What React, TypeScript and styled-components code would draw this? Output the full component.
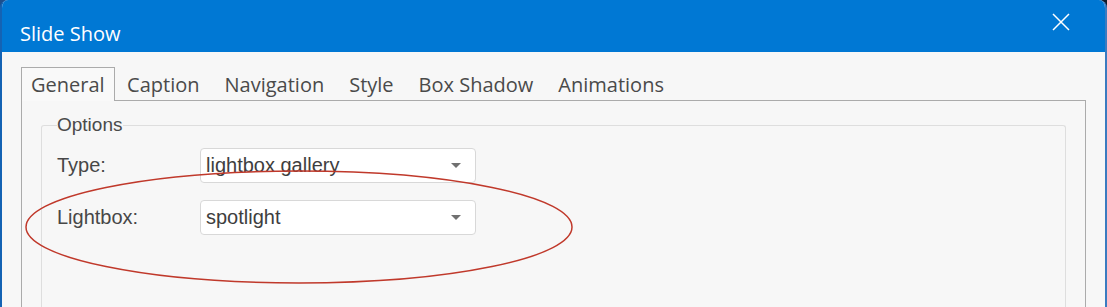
import React from 'react';
import styled, { createGlobalStyle } from 'styled-components';

const GlobalStyle = createGlobalStyle`
  html, body {
    margin: 0;
    padding: 0;
    background: linear-gradient(90deg, #1d4f8c 0%, #0e1a2a 100%);
  }
  #root {
    width: 1107px;
    height: 307px;
  }
`;

const Window = styled.div`
  position: relative;
  display: flex;
  flex-direction: column;
  width: 1107px;
  height: 307px;
  box-sizing: border-box;
  border-left: 2px solid #1463b4;
  border-right: 2px solid #3a7bc0;
  border-radius: 8px 8px 0 0;
  overflow: hidden;
  background-color: #f7f7f7;
`;

const TitleBar = styled.div`
  display: flex;
  align-items: flex-start;
  justify-content: space-between;
  flex: 0 0 52px;
  box-sizing: border-box;
  padding: 0 35px 0 18px;
  background-color: #0078d4;
  color: #ffffff;
  font-family: 'Open Sans', 'Noto Sans', sans-serif;
  font-size: 20px;
`;

const Title = styled.span`
  margin-top: 20px;
  line-height: 27px;
`;

const CloseButton = styled.div`
  display: flex;
  width: 18px;
  height: 18px;
  margin-top: 13px;
  cursor: pointer;
`;

const Body = styled.div`
  display: flex;
  flex-direction: column;
  flex: 1;
  padding: 15px 19px 0 19px;
`;

const TabStrip = styled.div`
  display: flex;
  align-items: flex-end;
  height: 33px;
  border-bottom: 1px solid #ababab;
`;

const Tab = styled.div<{ active?: boolean }>`
  display: flex;
  align-items: center;
  height: ${(p) => (p.active ? '34px' : '32px')};
  box-sizing: border-box;
  padding: 0 ${(p) => (p.active ? '9px' : '11.5px')};
  margin-bottom: ${(p) => (p.active ? '-1px' : '0')};
  border: 1px solid ${(p) => (p.active ? '#ababab' : 'transparent')};
  border-bottom: none;
  background-color: ${(p) => (p.active ? '#f9f9f9' : 'transparent')};
  color: #4a4a4a;
  font-family: 'Open Sans', 'Noto Sans', sans-serif;
  font-size: 20px;
  cursor: pointer;
`;

const TabPanel = styled.div`
  flex: 1;
  display: flex;
  flex-direction: column;
  padding: 14px 19px 0 19px;
  border-left: 1px solid #ababab;
  border-right: 1px solid #ababab;
`;

const GroupBox = styled.fieldset`
  flex: 1;
  margin: 0;
  padding: 13px 0 0 15px;
  border: 1px solid #dedede;
  border-bottom: none;
  border-radius: 3px 3px 0 0;
  font-family: 'Liberation Sans', Arial, sans-serif;
`;

const Legend = styled.legend`
  padding: 0 1px 0 0;
  color: #4a4a4a;
  font-size: 19px;
  line-height: 20px;
`;

const FieldGrid = styled.div`
  display: grid;
  grid-template-columns: 143px 276px;
  row-gap: 17px;
  align-items: center;
`;

const Label = styled.div`
  color: #474747;
  font-size: 20px;
`;

const Select = styled.div`
  display: flex;
  align-items: center;
  justify-content: space-between;
  height: 35px;
  box-sizing: border-box;
  padding: 0 14px 0 5px;
  border: 1px solid #d8d8d8;
  border-radius: 4px;
  background-color: #ffffff;
  color: #3e3e3e;
  font-size: 20px;
`;

const Arrow = styled.span`
  width: 0;
  height: 0;
  border-left: 5px solid transparent;
  border-right: 5px solid transparent;
  border-top: 5px solid #707070;
`;

const Highlight = styled.svg`
  position: absolute;
  left: 0;
  top: 0;
  pointer-events: none;
`;

const tabs = ['General', 'Caption', 'Navigation', 'Style', 'Box Shadow', 'Animations'];

const App: React.FC = () => {
  return (
    <>
      <GlobalStyle />
      <Window>
        <TitleBar>
          <Title>Slide Show</Title>
          <CloseButton>
            <svg width="18" height="18" viewBox="0 0 18 18">
              <path d="M1 1 L17 17 M17 1 L1 17" stroke="#ffffff" strokeWidth="1.5" />
            </svg>
          </CloseButton>
        </TitleBar>
        <Body>
          <TabStrip>
            {tabs.map((t, i) => (
              <Tab key={t} active={i === 0}>
                {t}
              </Tab>
            ))}
          </TabStrip>
          <TabPanel>
            <GroupBox>
              <Legend>Options</Legend>
              <FieldGrid>
                <Label>Type:</Label>
                <Select>
                  <span>lightbox gallery</span>
                  <Arrow />
                </Select>
                <Label>Lightbox:</Label>
                <Select>
                  <span>spotlight</span>
                  <Arrow />
                </Select>
              </FieldGrid>
            </GroupBox>
          </TabPanel>
        </Body>
        <Highlight width="1107" height="307">
          <ellipse cx="297" cy="227" rx="273" ry="56" fill="none" stroke="#c0392b" strokeWidth="1.5" />
        </Highlight>
      </Window>
    </>
  );
};

export default App;
